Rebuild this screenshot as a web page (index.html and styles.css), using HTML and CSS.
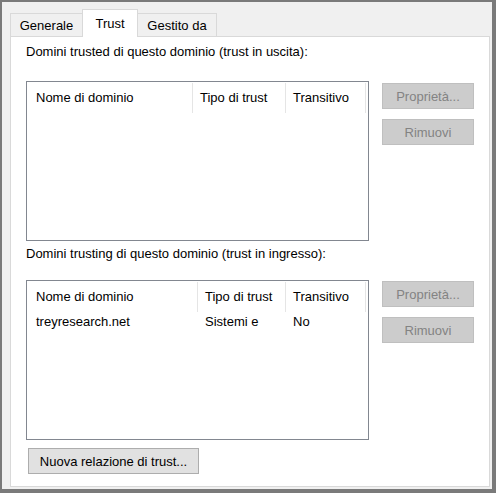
FILE: index.html
```html
<!DOCTYPE html>
<html lang="it">
<head>
<meta charset="utf-8">
<title>Proprietà</title>
<link rel="stylesheet" href="styles.css">
</head>
<body>
<div class="window">
  <div class="tabs">
    <div class="tab tab-first">Generale</div>
    <div class="tab tab-active">Trust</div>
    <div class="tab tab-last">Gestito da</div>
  </div>
  <div class="panel">
    <div class="label label-first">Domini trusted di questo dominio (trust in uscita):</div>
    <div class="section section-first">
      <div class="list list-a">
        <div class="list-row list-head">
          <div class="cell cell-name">Nome di dominio</div>
          <div class="cell">Tipo di trust</div>
          <div class="cell">Transitivo</div>
          <div class="cell cell-rest"></div>
        </div>
      </div>
      <div class="side side-first">
        <button class="btn btn-disabled" disabled>Proprietà...</button>
        <button class="btn btn-disabled" disabled>Rimuovi</button>
      </div>
    </div>
    <div class="label label-second">Domini trusting di questo dominio (trust in ingresso):</div>
    <div class="section section-second">
      <div class="list list-b">
        <div class="list-row list-head">
          <div class="cell cell-name">Nome di dominio</div>
          <div class="cell">Tipo di trust</div>
          <div class="cell">Transitivo</div>
          <div class="cell cell-rest"></div>
        </div>
        <div class="list-row list-item">
          <div class="cell cell-name">treyresearch.net</div>
          <div class="cell">Sistemi e</div>
          <div class="cell">No</div>
          <div class="cell cell-rest"></div>
        </div>
      </div>
      <div class="side side-second">
        <button class="btn btn-disabled" disabled>Proprietà...</button>
        <button class="btn btn-disabled" disabled>Rimuovi</button>
      </div>
    </div>
    <div class="footer">
      <button class="btn btn-new">Nuova relazione di trust...</button>
    </div>
  </div>
</div>
</body>
</html>
```

FILE: styles.css
```css
html, body {
  margin: 0;
  padding: 0;
}

body {
  font-family: "Liberation Sans", Arial, sans-serif;
  font-size: 13px;
  line-height: 15px;
  color: #000;
  background: #f0f0f0;
}

.window {
  width: 496px;
  height: 493px;
  box-sizing: border-box;
  border-style: solid;
  border-color: #7a7a7a;
  border-width: 2px 4px 4px 2px;
  background: #f0f0f0;
  padding: 7px 2px 2px 8px;
  display: flex;
  flex-direction: column;
}

.tabs {
  display: flex;
  align-items: flex-end;
  margin-bottom: -1px;
  position: relative;
  z-index: 1;
}

.tab {
  box-sizing: border-box;
  height: 23px;
  margin-bottom: 1px;
  padding-top: 4px;
  text-align: center;
  border: 1px solid #d9d9d9;
  border-bottom: none;
  background: #f0f0f0;
}

.tab-first {
  width: 72px;
  border-right: none;
}

.tab-active {
  width: 56px;
  height: 28px;
  margin-bottom: 0;
  padding-top: 6px;
  background: #fff;
}

.tab-last {
  width: 79px;
  border-left: none;
}

.panel {
  flex: 1;
  background: #fff;
  border: 1px solid #d9d9d9;
  padding: 7px 0 0 15px;
  display: flex;
  flex-direction: column;
}

.label-second {
  margin-top: 5px;
}

.section {
  display: flex;
  align-items: flex-start;
  gap: 13px;
}

.section-first {
  margin-top: 22px;
}

.section-second {
  margin-top: 19px;
}

.list {
  box-sizing: border-box;
  width: 343px;
  height: 160px;
  border: 1px solid #828790;
  background: #fff;
}

.list-row {
  display: grid;
}

.list-a .list-row {
  grid-template-columns: 166px 93px 80px 1fr;
}

.list-b .list-row {
  grid-template-columns: 171px 88px 80px 1fr;
}

.list-head {
  height: 31px;
}

.list-head .cell {
  border-right: 1px solid #e5e5e5;
  margin-top: 1px;
  padding-top: 7px;
}

.list-head .cell-rest {
  border-right: none;
}

.list-item {
  height: 20px;
}

.list-item .cell {
  padding-top: 2px;
}

.cell {
  box-sizing: border-box;
  padding-left: 7px;
  white-space: nowrap;
  overflow: hidden;
}

.cell-name {
  padding-left: 9px;
}

.side {
  display: flex;
  flex-direction: column;
  gap: 10px;
}

.side-first {
  padding-top: 2px;
}

.side-second {
  padding-top: 1px;
}

.btn {
  box-sizing: border-box;
  font-family: "Liberation Sans", Arial, sans-serif;
  font-size: 13px;
  line-height: 15px;
  padding: 0;
  margin: 0;
  text-align: center;
}

.btn-disabled {
  width: 92px;
  height: 26px;
  background: #cccccc;
  border: 1px solid #bfbfbf;
  color: #838383;
}

.footer {
  margin-top: 8px;
  padding-left: 2px;
}

.btn-new {
  width: 171px;
  height: 26px;
  background: #e1e1e1;
  border: 1px solid #adadad;
  color: #000;
}
```
